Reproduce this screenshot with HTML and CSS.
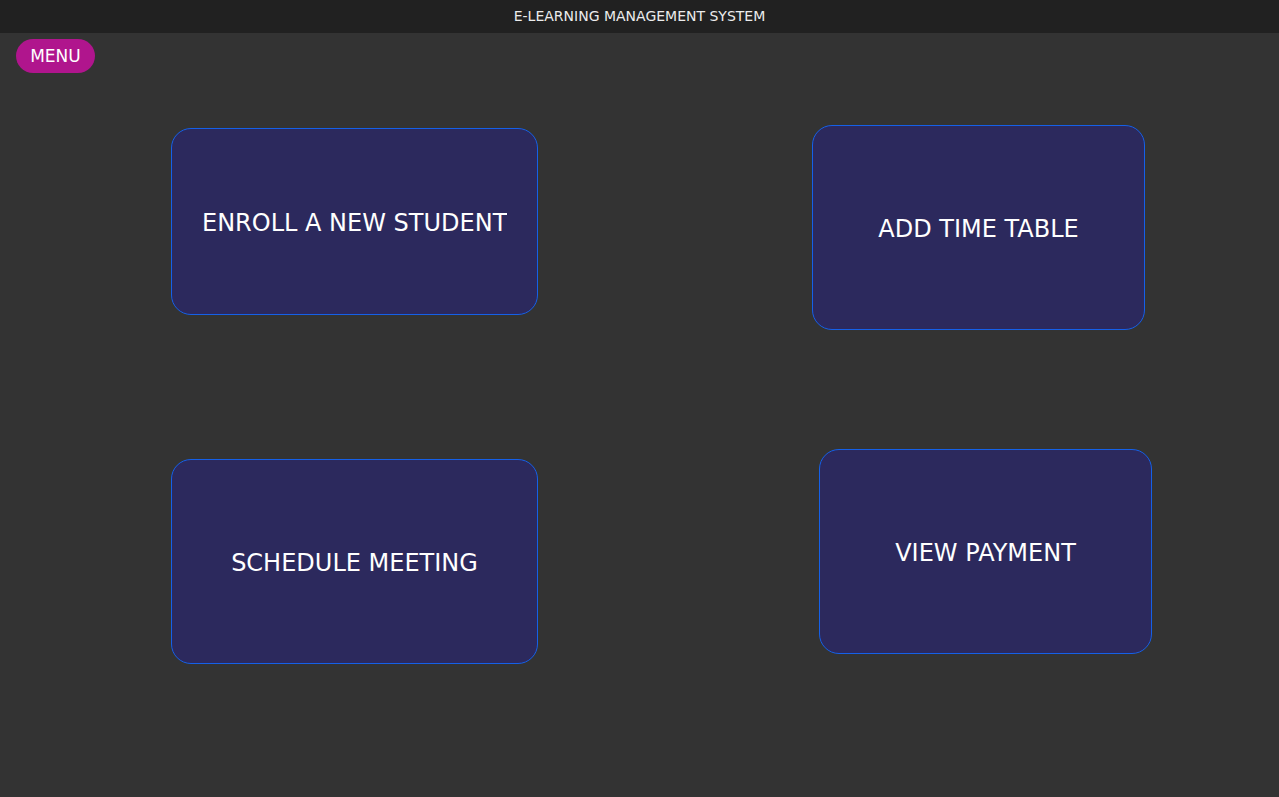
FILE: index.html
```html
<!DOCTYPE html>
<html lang="en">
<head>
<meta charset="utf-8">
<title>E-Learning Management System</title>
<link rel="stylesheet" href="styles.css">
</head>
<body>
  <header class="topbar">E-LEARNING MANAGEMENT SYSTEM</header>
  <div class="menu-wrap"><button class="menu-btn">MENU</button></div>
  <main class="dashboard">
    <div class="row row-1">
      <a class="card card-enroll"><span class="card-label label-clip">ENROLL A NEW STUDENT</span></a>
      <a class="card card-timetable"><span class="card-label">ADD TIME TABLE</span></a>
    </div>
    <div class="row row-2">
      <a class="card card-meeting"><span class="card-label">SCHEDULE MEETING</span></a>
      <a class="card card-payment"><span class="card-label">VIEW PAYMENT</span></a>
    </div>
  </main>
</body>
</html>
```

FILE: styles.css
```css
* { box-sizing: border-box; }
html, body {
  margin: 0;
  padding: 0;
  background: #333333;
  font-family: "DejaVu Sans", "Liberation Sans", sans-serif;
  color: #ffffff;
  min-height: 797px;
}
.topbar {
  height: 33px;
  background: #212121;
  color: #ececec;
  font-size: 14px;
  display: flex;
  align-items: center;
  justify-content: center;
  padding-bottom: 2px;
}
.menu-wrap {
  padding: 6px 0 0 16px;
}
.menu-btn {
  display: block;
  width: 79px;
  height: 34px;
  border: none;
  border-radius: 17px;
  background: #b0158d;
  color: #ffffff;
  font-family: "DejaVu Sans", "Liberation Sans", sans-serif;
  font-size: 17px;
  padding: 0;
}
.dashboard {
  padding-top: 52px;
}
.row {
  display: flex;
  align-items: flex-start;
}
.row-2 {
  margin-top: 119px;
}
.card {
  display: flex;
  align-items: center;
  justify-content: center;
  background: #2c295d;
  border: 1px solid #1560e8;
  border-radius: 20px;
  color: #ffffff;
  text-decoration: none;
  padding-top: 2px;
}
.card-label {
  font-size: 24px;
  white-space: nowrap;
}
.label-clip {
  display: block;
  width: 305px;
  overflow: hidden;
}
.card-enroll {
  width: 367px;
  height: 187px;
  margin: 3px 0 0 171px;
  padding-left: 30px;
  justify-content: flex-start;
}
.card-timetable {
  width: 333px;
  height: 205px;
  margin-left: 274px;
}
.card-meeting {
  width: 367px;
  height: 205px;
  margin: 10px 0 0 171px;
}
.card-payment {
  width: 333px;
  height: 205px;
  margin-left: 281px;
}
```
